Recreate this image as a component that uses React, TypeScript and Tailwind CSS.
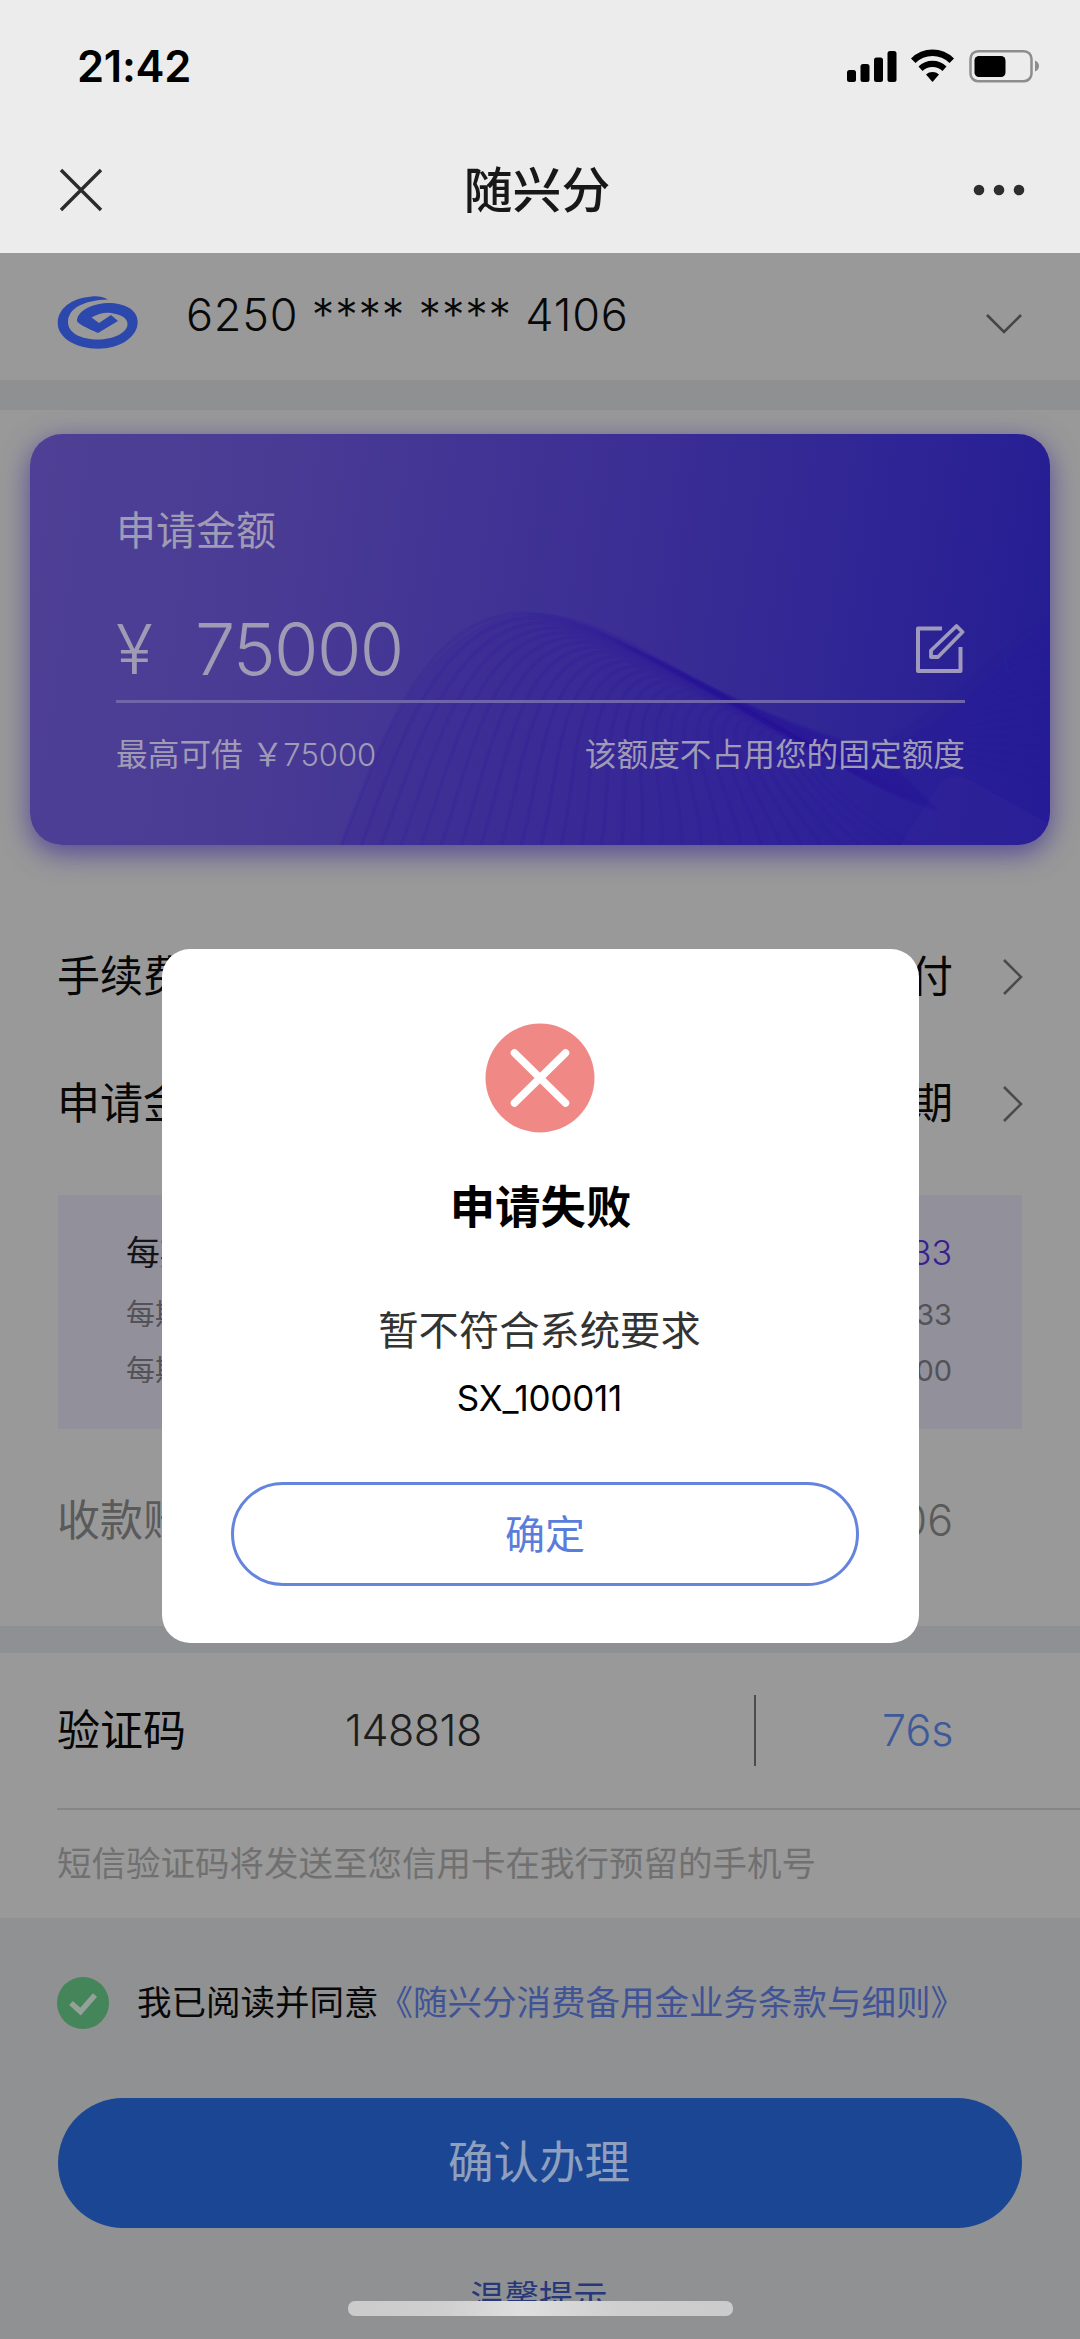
import React from "react";

const sans = "font-['Inter','Noto_Sans_CJK_SC',sans-serif]";

function Chevron() {
  return (
    <svg width="22" height="38" viewBox="0 0 22 38" fill="none" stroke="#4a4a4a" strokeWidth="2.6">
      <path d="M2 2 L19 19 L2 36" />
    </svg>
  );
}

function StatusBar() {
  return (
    <div className="flex h-[132px] items-center justify-between pl-[77px] pr-[38px]">
      <span className="mt-[1px] text-[43.5px] font-semibold leading-none tracking-[-0.3px] text-black">21:42</span>
      <div className="flex items-center">
        <svg width="196" height="34" viewBox="0 0 196 34">
          <rect x="1" y="21" width="9" height="12" rx="2.5" />
          <rect x="14.5" y="15" width="9" height="18" rx="2.5" />
          <rect x="28" y="8.5" width="9" height="24.5" rx="2.5" />
          <rect x="41.5" y="2" width="9" height="31" rx="2.5" />
          <path d="M65 9.5 A30 30 0 0 1 108 9.5 L103.5 14 A24 24 0 0 0 69.5 14 Z" />
          <path d="M72.5 17.5 A20 20 0 0 1 100.5 17.5 L96.5 22 A14.5 14.5 0 0 0 76.5 22 Z" />
          <path d="M80 25.5 A10 10 0 0 1 93 25.5 L86.5 33 Z" />
          <rect x="124.5" y="2.2" width="61" height="30" rx="7.5" fill="none" stroke="#8d8d8d" strokeWidth="2.5" />
          <rect x="128.5" y="7" width="31" height="21" rx="4.5" />
          <path d="M189 11.5 Q193 13 193 17 Q193 21 189 22.5 Z" fill="#8d8d8d" />
        </svg>
      </div>
    </div>
  );
}

function Waves() {
  const lines = Array.from({ length: 30 }, (_, i) => {
    const x = i * 20;
    return `M${311 + x} 412 C${350 + i * 18} ${310 + i * 3.5} ${395 + i * 13} ${178 + i * 5.5} ${495 + i * 10} ${179 + i * 4.8} C${590 + i * 8} ${184 + i * 5} ${650 + i * 6} ${262 + i * 3} ${850 + i * 2} ${318 + i * 2}`;
  });
  const right = Array.from({ length: 16 }, (_, i) =>
    `M1020 ${180 + i * 11} C${970 - i * 2} ${215 + i * 8} ${925 - i} ${265 + i * 3} ${850 + i * 3} ${312 + i}`
  );
  const upper = Array.from({ length: 14 }, (_, i) =>
    `M1020 ${40 + i * 11} C1000 ${60 + i * 10} ${985 - i * 2} ${90 + i * 9} ${945 + i * 3} ${160 + i * 7}`
  );
  return (
    <svg className="absolute inset-0" width="1020" height="412" viewBox="0 0 1020 412" fill="none">
      <defs>
        <linearGradient id="hill" x1="0" y1="0" x2="1" y2="0">
          <stop offset="0" stopColor="#2f1594" stopOpacity="0.14" />
          <stop offset="0.6" stopColor="#2c18a0" stopOpacity="0.28" />
          <stop offset="1" stopColor="#2415a0" stopOpacity="0.2" />
        </linearGradient>
      </defs>
      <path d="M311 412 C350 310 395 178 510 179 C600 184 660 262 830 314 C870 322 940 270 1020 180 V412 Z" fill="url(#hill)" />
      <path d="M870 412 L910 348 Q925 335 950 352 L1020 390 V412 Z" fill="#3a2b9c" fillOpacity="0.25" />
      {lines.map((d) => (
        <path key={d} d={d} stroke="#2a1398" strokeOpacity="0.15" strokeWidth="3.5" />
      ))}
      {right.map((d) => (
        <path key={d} d={d} stroke="#241a92" strokeOpacity="0.14" strokeWidth="3" />
      ))}
      {upper.map((d) => (
        <path key={d} d={d} stroke="#2a35a5" strokeOpacity="0.14" strokeWidth="1.5" />
      ))}
    </svg>
  );
}

function AmountCard() {
  return (
    <div className="relative mx-[30px] mt-[24px] h-[411px] rounded-[32px] bg-[linear-gradient(98deg,#4f4096_0%,#493a94_25%,#3c2f94_55%,#2e2495_82%,#241c93_100%)] shadow-[0_8px_28px_rgba(60,45,150,0.75)]">
      <div className="absolute inset-0 overflow-hidden rounded-[32px]"><Waves /></div>
      <div className="relative flex h-full flex-col pl-[86px] pr-[85px] text-[#a09bb5]">
        <div className="mt-[69px] h-[56px] text-[40px] leading-[56px]">申请金额</div>
        <div className="mt-[46px] flex h-[98px] items-center justify-between border-b-[3px] border-[#7064ab] pb-[8px]">
          <div className="flex items-center font-[360] leading-none">
            <span className="w-[79px] text-[68px]">¥</span>
            <span className="text-[72px] tracking-[-1.6px]">75000</span>
          </div>
          <svg width="50" height="52" viewBox="0 0 50 52" fill="none" stroke="#9f9abc" strokeWidth="4" strokeLinejoin="round">
            <path d="M27 5.5 H3 V48 H45.5 V24" />
            <path d="M41.5 3 L47.5 9 L23 34 H16 V27.5 Z" strokeWidth="3.8" />
          </svg>
        </div>
        <div className="mt-[30px] flex h-[44px] items-center justify-between text-[31.7px]">
          <span>最高可借 ￥<span className="text-[31px] font-[350]">75000</span></span>
          <span>该额度不占用您的固定额度</span>
        </div>
      </div>
    </div>
  );
}

function Row({ label, value }: { label: string; value: string }) {
  return (
    <div className="flex h-[127px] items-center pl-[57px] pr-[56px] text-[43px] text-[#070707]">
      <span className="flex-1">{label}</span>
      <span className="mr-[49px]">{value}</span>
      <Chevron />
    </div>
  );
}

function Modal() {
  return (
    <div className="absolute left-[162px] top-[949px] flex h-[694px] w-[757px] flex-col items-center rounded-[28px] bg-white">
      <svg className="mt-[74px] mr-[2px]" width="110" height="110" viewBox="0 0 110 110">
        <circle cx="55" cy="55" r="54.5" fill="#f08985" />
        <path d="M29.5 30 L80.5 80 M80.5 30 L29.5 80" stroke="#fff" strokeWidth="7.5" strokeLinecap="round" />
      </svg>
      <div className="mt-[43px] h-[64px] text-[45.4px] font-bold leading-[64px] text-black">申请失败</div>
      <div className="mt-[63px] mr-[2px] h-[56px] text-[40.3px] leading-[56px] text-[#333]">暂不符合系统要求</div>
      <div className="mt-[17px] mr-[2px] h-[44px] text-[35px] leading-[44px] tracking-[-0.2px] text-black">SX_100011</div>
      <button className="ml-[9px] mt-[62px] h-[104px] w-[628px] rounded-[52px] border-[3px] border-[#6484dd] pt-[1px] text-[40px] text-[#5a7cdb]">确定</button>
    </div>
  );
}

export default function App() {
  return (
    <div className={`${sans} relative flex h-[2339px] w-[1080px] flex-col overflow-hidden bg-[#999]`}>
      <header className="h-[253px] shrink-0 bg-[#ececec]">
        <StatusBar />
        <div className="flex h-[116px] items-center justify-between pl-[59px] pr-[55px]">
          <svg width="44" height="44" viewBox="0 0 44 44" stroke="#2b2b2b" strokeWidth="3.4" fill="none">
            <path d="M2 2 L42 42 M42 2 L2 42" />
          </svg>
          <h1 className="mt-[2px] mr-[2px] text-[48.8px] font-medium text-[#181818]">随兴分</h1>
          <svg width="52" height="12" viewBox="0 0 52 12" fill="#2e2e2e">
            <circle cx="6" cy="6" r="5.3" /><circle cx="26" cy="6" r="5.3" /><circle cx="46" cy="6" r="5.3" />
          </svg>
        </div>
      </header>

      <section className="flex h-[127px] shrink-0 items-center pl-[57px] pr-[40px]">
        <svg className="mt-[12px]" width="82" height="54" viewBox="0 0 82 54" fill="#2c48ac">
          <path d="M51 3.5 C46 0.5 40 0 35 0.5 C14 2 0.7 13 0.7 27 C0.7 42 19 52.7 41 52.7 C63 52.7 80.7 41 80.7 26 C80.7 13 66 6.5 50 7 C33 8 20 16 20 25 C21 28 31 32.5 41 37 L61 25 L54 19 L42 27 L34.5 21.5 C41 17.5 48 16 54 17 C64 18.500 70.5 22 70.5 28 C70.5 37 56 43.5 41 43.5 C24 43.5 11 37 11 26 C11 13 26 4 51 3.5 Z" />
        </svg>
        <span className="mb-[3px] ml-[47px] flex-1 text-[45px] font-[350] tracking-[0.8px] text-[#080808]">6250 **** **** 4106</span>
        <svg className="mr-[18px] mt-[15px]" width="36" height="22" viewBox="0 0 36 22" fill="none" stroke="#454545" strokeWidth="2.6">
          <path d="M1 2 L18 19 L35 2" />
        </svg>
      </section>
      <div className="h-[30px] shrink-0 bg-[#8e9092]" />

      <main className="h-[1216px] shrink-0">
        <AmountCard />
        <div className="mt-[68px]">
          <Row label="手续费收取方式" value="分期支付" />
          <Row label="申请金额期数" value="12期" />
        </div>
        <div className="mx-[58px] mt-[28px] h-[234px] bg-[#92909a] pl-[68px] pr-[70px]">
          <div className="flex h-[89px] items-end justify-between pb-[1px] text-[34px] leading-[60px] text-[#141418]"><span>每期应还</span><span className="font-[360] text-[#35218c]">6770.33</span></div>
          <div className="flex h-[61px] items-center justify-between text-[29px] text-[#535257]"><span>每期本金</span><span>6250.33</span></div>
          <div className="flex h-[51px] items-center justify-between text-[29px] text-[#535257]"><span>每期手续费</span><span>520.00</span></div>
        </div>
        <div className="mt-[27px] flex h-[128px] items-center justify-between pl-[57px] pr-[127px] text-[43px] text-[#5a5a5a]">
          <span>收款账户</span><span className="font-[350]">4106</span>
        </div>
      </main>
      <div className="h-[27px] shrink-0 bg-[#8e9093]" />

      <section className="h-[265px] shrink-0">
        <div className="ml-[57px] flex h-[157px] items-center border-b-[2px] border-[#858585] text-[43px]">
          <span className="w-[288px] text-[#060606]">验证码</span>
          <span className="w-[409px] font-[350] tracking-[-0.5px] text-[#1e1e1e]">148818</span>
          <span className="h-[71px] w-[2px] bg-[#4c4c4c]" />
          <span className="ml-[126px] font-[350] text-[#3f5a99]">76s</span>
        </div>
        <div className="ml-[57px] h-[108px] text-[34.5px] leading-[108px] text-[#707070]">短信验证码将发送至您信用卡在我行预留的手机号</div>
      </section>

      <footer className="flex flex-1 flex-col items-center bg-[#909192]">
        <div className="mt-[59px] flex h-[52px] items-center self-stretch pl-[57px] text-[34.5px]">
          <svg width="52" height="52" viewBox="0 0 52 52">
            <circle cx="26" cy="26" r="26" fill="#45855a" />
            <path d="M14 26 L23.5 34.5 L38 18" fill="none" stroke="#94a199" strokeWidth="5.5" />
          </svg>
          <span className="ml-[28px] text-[#080808]">我已阅读并同意</span>
          <span className="text-[#405396]">《随兴分消费备用金业务条款与细则》</span>
        </div>
        <button className="mt-[69px] h-[130px] w-[964px] rounded-[65px] bg-[#1b4694] pr-[2px] pt-[1px] text-[45.5px] text-[#8f9fbe]">确认办理</button>
        <span className="mr-[2px] mt-[45px] text-[34.3px] leading-[50px] text-[#26387a]">温馨提示</span>
      </footer>

      <Modal />
      <div className="absolute left-[348px] top-[2301px] h-[15px] w-[385px] rounded-[7px] bg-[linear-gradient(90deg,#cbcbcb_0%,#cfcfcf_25%,#dfdfdf_45%,#cfcfcf_70%,#cbcbcb_100%)]" />
      <div className="absolute left-0 top-[2316px] h-[23px] w-full bg-[#909192]" />
    </div>
  );
}
